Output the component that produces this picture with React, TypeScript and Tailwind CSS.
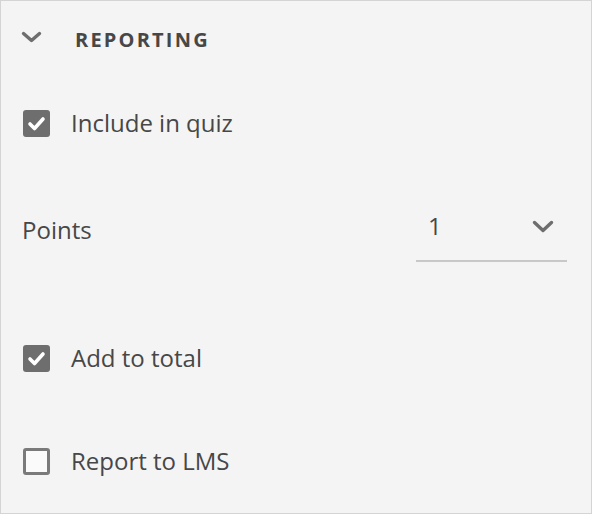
import React from "react";

function Checked() {
  return (
    <div className="w-[27px] h-[27px] rounded-[3px] bg-[#6e6e6e] flex items-center justify-center shrink-0">
      <svg width="27" height="27" viewBox="0 0 27 27">
        <path d="M7 14 L11.5 18.5 L20 9" fill="none" stroke="#ffffff" strokeWidth="3.6" strokeLinecap="round" strokeLinejoin="round" />
      </svg>
    </div>
  );
}

function Unchecked() {
  return <div className="w-[27px] h-[27px] rounded-[3px] border-[3px] border-[#7a7a7a] bg-[#fafafa] shrink-0" />;
}

function Chevron({ w = 20, h = 12 }: { w?: number; h?: number }) {
  return (
    <svg width={w} height={h} viewBox={`0 0 ${w} ${h}`}>
      <path d={`M2.5 2.5 L${w / 2} ${h - 2.5} L${w - 2.5} 2.5`} fill="none" stroke="#6e6e6e" strokeWidth="3.4" strokeLinecap="round" strokeLinejoin="round" />
    </svg>
  );
}

function CheckRow({ checked, label, h }: { checked: boolean; label: string; h: string }) {
  return (
    <div className={`flex items-center pl-[22px] gap-[21px] ${h}`}>
      {checked ? <Checked /> : <Unchecked />}
      <span className="text-[24px] leading-[28px] text-[#474747]">{label}</span>
    </div>
  );
}

export default function App() {
  return (
    <div
      className="w-[592px] h-[514px] bg-[#f4f4f4] border border-[#d4d4d4] overflow-hidden flex flex-col"
      style={{ fontFamily: '"Open Sans", "Noto Sans", sans-serif' }}
    >
      <div className="h-[77px] flex items-center pl-[20px]">
        <div className="mb-[6px]">
          <Chevron w={21} h={12} />
        </div>
        <span className="ml-[33px] text-[20px] font-bold tracking-[2.2px] text-[#474747] leading-none">REPORTING</span>
      </div>
      <CheckRow checked label="Include in quiz" h="h-[90px]" />
      <div className="h-[124px] flex items-center justify-between pl-[21px] pr-[24px]">
        <span className="text-[24px] leading-[28px] text-[#474747]">Points</span>
        <div className="self-start mt-[44px] w-[151px] h-[50px] border-b-2 border-[#c8c8c8] flex items-start justify-between pl-[12px] pr-[13px]">
          <span className="text-[24px] leading-[28px] text-[#474747]">1</span>
          <div className="mt-[8px]">
            <Chevron w={22} h={13} />
          </div>
        </div>
      </div>
      <CheckRow checked label="Add to total" h="h-[132px]" />
      <CheckRow checked={false} label="Report to LMS" h="h-[74px]" />
    </div>
  );
}
